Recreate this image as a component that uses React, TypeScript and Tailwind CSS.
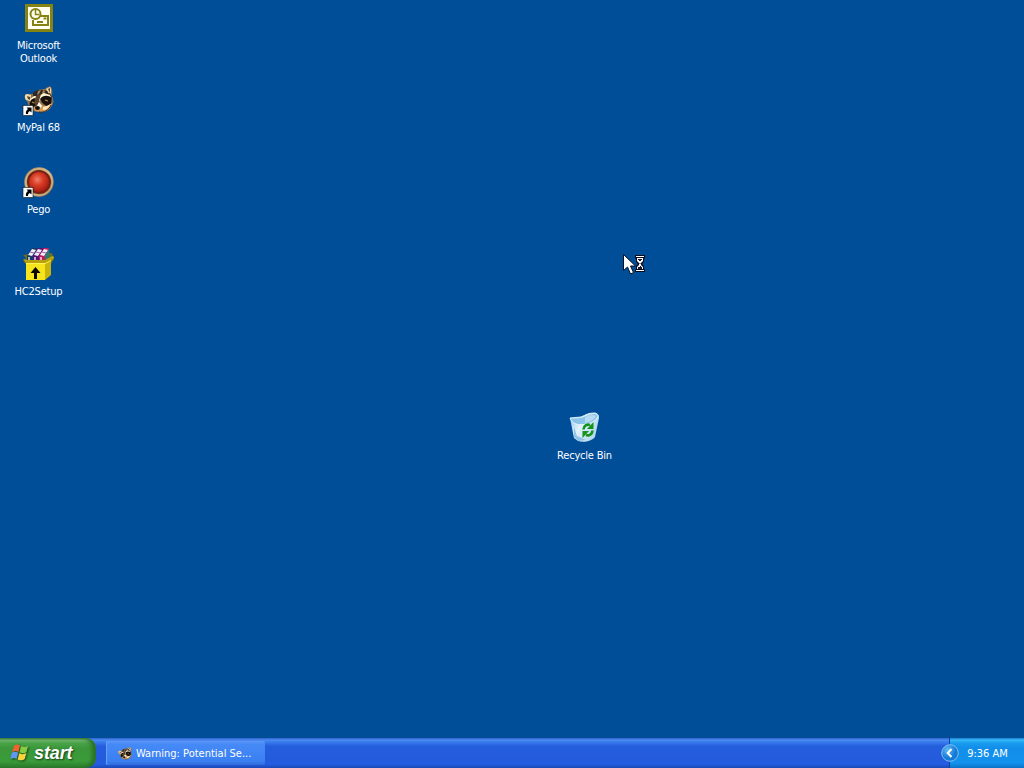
import React from "react";

const Shortcut = () => (
  <g>
    <rect x="1" y="21.500" width="10" height="10" fill="#fff" stroke="#111" strokeWidth=".6" />
    <path d="M4.500 23.500h5v5l-1.700-1.600c-1.600 1-2 1.800-1.800 3.200H4c-.5-2.300.3-3.700 2-5z" fill="#000" />
  </g>
);

const OutlookIcon = () => (
  <svg width="32" height="32" viewBox="0 0 32 32" fill="none">
    <rect x="3" y="2" width="28" height="28" fill="#858413" />
    <rect x="6" y="5" width="22" height="22" fill="#fffef0" />
    <path d="M16 14h10v9H11v-5M15 20h6" stroke="#858413" strokeWidth="2" />
    <path d="M21.500 15.500h3v2h-3z" fill="#858413" />
    <circle cx="13.500" cy="12" r="5" fill="#fffef0" stroke="#858413" strokeWidth="2" />
    <path d="M13.500 8v4.500h3.500" stroke="#858413" strokeWidth="1.500" />
  </svg>
);

const Raccoon = () => (
  <g>
    <path d="M5 17C2 15 2 10 5 10l6 0c3-4 7-5 12-5 2-2 4-3 6-2 2 3 1 6 1 9 2 4 2 8-1 11-3 4-7 6-12 5-5 0-10-3-12-11z" fill="#8f7350" />
    <path d="M4 16C2 13 3 10 5 10l4 1-1 6zM24 5l4-2c2 3 1 6 0 8z" fill="#f0d9a8" />
    <path d="M5 12l3 1v3l-2-1zM26 5l2-1v5z" fill="#594028" />
    <path d="M11 9c4-4 9-4 14-2l3 5-8-2-9 4z" fill="#33271d" />
    <path d="M16 7l3-1-2 4-2 1zM21 6l2 1-1 3h-2z" fill="#9c8767" />
    <path d="M8 15l4-3 5 0 5-3 6 2 2 5-8-2-5 3-5 6-4-1z" fill="#fff3d3" />
    <path d="M9 16c3-3 7-2 8 1l-2 4-5 3c-3-1-3-5-1-8z" fill="#15100c" />
    <path d="M18 15c3-4 8-4 12-1l-1 6-4 2c-3-1-5-3-7-7z" fill="#18110d" />
    <path d="M14 12l5-2-2 7-3 5-2-3z" fill="#5a432e" />
    <path d="M17 18l4 4 4 0 5-3c-1 6-5 9-10 9l-7-1-2-3 4-2z" fill="#d69d5e" />
    <path d="M21 23l4-1 4-2c-2 4-5 6-8 6z" fill="#ffe8bd" />
    <path d="M17 18l3 4-3 3-3-1z" fill="#fff8e4" />
    <ellipse cx="15.500" cy="24" rx="2.500" ry="2" fill="#100e0d" />
    <path d="M17 28c5 1 10-2 12-7M27 9l3 4" stroke="#402b1c" fill="none" />
    <path d="M10 18l2 1M23 16l3 1" stroke="#bd8948" strokeWidth="1.200" />
  </g>
);

const MyPalIcon = () => (
  <svg width="32" height="32" viewBox="0 0 32 32">
    <Raccoon />
    <Shortcut />
  </svg>
);

const PegoIcon = () => (
  <svg width="32" height="32" viewBox="0 0 32 32">
    <defs>
      <linearGradient id="pegoRing" x2="1" y2="1">
        <stop stopColor="#9c7b4f" />
        <stop offset=".5" stopColor="#d8b888" />
        <stop offset="1" stopColor="#805f3b" />
      </linearGradient>
      <radialGradient id="pegoBall" cx=".42" cy=".38" r=".62">
        <stop stopColor="#ee806a" />
        <stop offset=".45" stopColor="#d93e26" />
        <stop offset="1" stopColor="#a91c10" />
      </radialGradient>
    </defs>
    <circle cx="17" cy="16" r="14.700" fill="url(#pegoRing)" />
    <circle cx="17" cy="16" r="13.400" fill="none" stroke="#d5ba8b" />
    <circle cx="17" cy="16" r="12" fill="#772013" />
    <circle cx="17" cy="16" r="10" fill="url(#pegoBall)" />
    <Shortcut />
  </svg>
);

const SetupIcon = () => (
  <svg width="32" height="32" viewBox="0 0 32 32">
    <path d="M1 7l7-1 22-1 2 6-3 5H4l-3-3 3-3z" fill="#746b17" />
    <path d="M5 13V8l5-8h6l-5 13z" fill="#123c62" />
    <path d="M11 13V8l5-8h6l-5 13z" fill="#56137c" />
    <path d="M17 13V8l5-8h5l-4 13z" fill="#c51b57" />
    <path d="M6 7l4-6 4 1-4 6zM12 7l4-6 4 1-4 6zM18 7l4-6 4 1-4 6z" fill="#f2edfa" />
    <path d="M8 4l4 1M14 4l4 1M20 4l4 1" stroke="#9b5ca8" />
    <path d="M7 9v4M13 9v4M19 9v4" stroke="#e7ddf0" strokeWidth="1.500" />
    <path d="M23 13V7l4-6 1 10-3 3z" fill="#287c76" />
    <path d="M4 15h19v17H4z" fill="#f6e51b" />
    <path d="M23 15l6-4v16l-6 5z" fill="#c9b40c" />
    <path d="M4 15l-3-4 4 1h18l7-4 3 1-4 4-6 2z" fill="#b7a10d" />
    <path d="M4 15.500h19l6-3" fill="none" stroke="#fff354" />
    <path d="M13.500 19l5 6H15v6h-3v-6H8.500z" fill="#080700" />
  </svg>
);

const RecycleIcon = () => (
  <svg width="32" height="32" viewBox="0 0 32 32">
    <defs>
      <linearGradient id="bin" x2="1" y2=".5">
        <stop stopColor="#85bfea" />
        <stop offset=".45" stopColor="#e3f2fc" />
        <stop offset="1" stopColor="#b1d8ed" />
      </linearGradient>
    </defs>
    <path d="M2 6l11-1c5-2 7-4 13-4 3 0 5 2 5 5l-4 19c-3 4-11 6-17 4l-4-3z" fill="url(#bin)" />
    <path d="M3 7l10-1c4-1 7-4 13-4 2 0 4 1 3 3-3 5-9 7-16 7-5 0-8-1-10-5z" fill="#8ac3e9" />
    <path d="M17 5c4-2 8-3 11-1-2 4-6 6-11 7z" fill="#b5dbf2" />
    <path d="M2 6l11-1c5-2 7-4 13-4 3 0 5 2 4 4-4 6-10 8-17 8-5 0-9-2-11-7z" fill="none" stroke="#dcf1fc" />
    <path d="M6 15l3 9 9 4-8 1-4-4z" fill="#7bb6df" opacity=".75" />
    <path d="M15.500 17.500c.2-4 3.500-5.500 6.500-4.500M24.500 18.500c-.2 4-3.500 5.500-6.500 4.500" fill="none" stroke="#15921b" strokeWidth="2.600" />
    <path d="M25.500 10v7h-6.500zM14.500 26v-7H21z" fill="#15921b" />
  </svg>
);

const WindowsLogo = () => (
  <svg width="20" height="20" viewBox="0 0 20 20" className="drop-shadow-[1px_1px_1px_#174817]">
    <path d="M4 3c2-2 4-2 6-.5L8.500 9C6 7.500 4 7.700 2 9z" fill="#f26332" />
    <path d="M11 3c3 1.500 5 1.300 7-.2L16.500 9c-2 1.500-4 1.500-7 .3z" fill="#85cb43" />
    <path d="M1.800 10c2-1.500 4-1.500 6.400-.2L6.500 16c-2-1.500-4-1.300-6.200.2z" fill="#6298f5" />
    <path d="M9.300 10.300c3 1.300 5 1 7-.3L14.700 16c-2 1.700-4 1.600-7 .4z" fill="#fbd33c" />
  </svg>
);

const icons = [
  { label: ["Microsoft", "Outlook"], icon: <OutlookIcon />, place: "left-0 top-[2px]" },
  { label: ["MyPal 68"], icon: <MyPalIcon />, place: "left-0 top-[84px]" },
  { label: ["Pego"], icon: <PegoIcon />, place: "left-0 top-[166px]" },
  { label: ["HC2Setup"], icon: <SetupIcon />, place: "left-0 top-[248px]" },
  { label: ["Recycle Bin"], icon: <RecycleIcon />, place: "left-[546px] top-[412px]" },
];

const Desktop = () => (
  <main className="relative flex-1">
    {icons.map(({ label, icon, place }) => (
      <div key={label[0]} className={`absolute flex w-[76px] flex-col items-center ${place}`}>
        {icon}
        <div className="mt-[5px] ml-px text-center text-[11px] leading-[13px] tracking-[-0.2px] whitespace-nowrap">
          {label.map((line) => (
            <div key={line}>{line}</div>
          ))}
        </div>
      </div>
    ))}
    <svg className="absolute left-[622px] top-[253px]" width="26" height="24" viewBox="0 0 26 24">
      <path d="M1.500 1.500v16l4-3.500 3 7 3-1.500-3-6.500h5z" fill="#fff" stroke="#06111f" />
      <path d="M13 2h10v3l-1 1v3l-2 2 2 2v3l1 1v2H13v-2l1-1v-3l2-2-2-2V6l-1-1z" fill="#090b1c" />
      <path d="M14 3h8v1h-8zM14 17h8v1h-8zM15 5h6v3l-2 2v2l2 2v2h-6v-2l2-2v-2l-2-2z" fill="#fff" />
      <path d="M16 6h4v1h-1v1h-2V7h-1zM17.500 10h1v1h-1zM18 13h1v1h1v2h-4v-2h2z" fill="#171a30" />
    </svg>
  </main>
);

const Taskbar = () => (
  <footer className="flex h-[30px] bg-[linear-gradient(#2c61c9_0,#4b8bf4_2px,#397cee_4px,#255edc_8px,#235bdc_22px,#245ee3_26px,#1b48b5_30px)]">
    <button className="flex w-[96px] items-center rounded-r-[10px] bg-[linear-gradient(#3a7d3e_0,#78b979_2px,#4aa449_5px,#3c963a_10px,#3a9c3a_23px,#2b7b2c_30px)] pl-[10px] shadow-[inset_-4px_0_4px_#297029]">
      <WindowsLogo />
      <span className="ml-[4px] font-['Liberation_Sans'] text-[18px] leading-none font-bold tracking-[-0.1px] italic [text-shadow:1px_1px_2px_#173c17]">start</span>
    </button>
    <button className="mt-[3px] ml-[10px] flex h-[24px] w-[159px] items-center rounded-[2px] bg-[linear-gradient(#6098f8_0,#458af6_3px,#3b80f2_20px,#326cdc_24px)] pl-[11px] text-[11px] shadow-[inset_1px_0_#6ba0f8]">
      <svg width="15" height="15" viewBox="0 0 32 32">
        <Raccoon />
      </svg>
      <span className="mt-[2px] ml-[4px] whitespace-nowrap">Warning: Potential Se...</span>
    </button>
    <div className="relative ml-auto flex w-[75px] items-center justify-center border-l border-[#123f9e] bg-[linear-gradient(#197ccf_0,#36b9f7_2px,#199cee_5px,#128eea_10px,#1292ed_25px,#0c72c5_30px)] text-[11px]">
      <svg className="absolute top-[6px] left-[-9px]" width="18" height="18" viewBox="0 0 18 18">
        <defs>
          <radialGradient id="arrow" cx=".35" cy=".3">
            <stop stopColor="#64b8f5" />
            <stop offset="1" stopColor="#147bd6" />
          </radialGradient>
        </defs>
        <circle cx="9" cy="9" r="8.300" fill="url(#arrow)" stroke="#80bdf3" />
        <path d="M10.500 5L6.700 9l3.800 4" fill="none" stroke="#fff" strokeWidth="2" />
      </svg>
      <span className="mt-[2px] ml-px">9:36 AM</span>
    </div>
  </footer>
);

export default function App() {
  return (
    <div className="flex h-screen w-full flex-col overflow-hidden bg-[#004e98] font-['DejaVu_Sans_Condensed','DejaVu_Sans',sans-serif] text-white">
      <Desktop />
      <Taskbar />
    </div>
  );
}
